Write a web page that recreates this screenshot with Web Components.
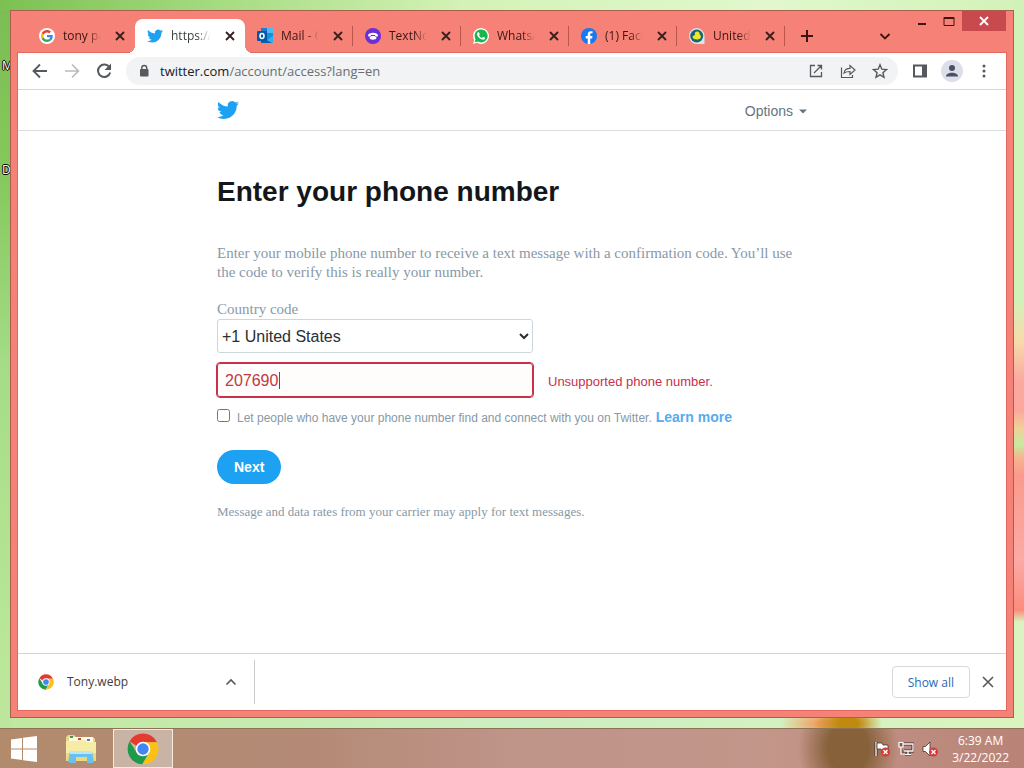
<!DOCTYPE html>
<html lang="en">
<head>
<meta charset="utf-8">
<title>Enter your phone number</title>
<style>
  html, body { margin: 0; height: 100%; }
  body { font-family: "Open Sans", "Noto Sans", sans-serif; font-size: 12px; color: #3c4043; }
</style>
</head>
<body>
<desk-top>
  <browser-window>
    <tab-strip slot="tabs">
      <browser-tab icon="google">tony paj</browser-tab>
      <browser-tab icon="bird" active>https://tw</browser-tab>
      <browser-tab icon="outlook">Mail - O</browser-tab>
      <browser-tab icon="textnow">TextNow</browser-tab>
      <browser-tab icon="whatsapp">WhatsAp</browser-tab>
      <browser-tab icon="facebook">(1) Faceb</browser-tab>
      <browser-tab icon="duck">United S</browser-tab>
    </tab-strip>
    <nav-bar slot="nav"></nav-bar>
    <site-page slot="page">
      <site-header></site-header>
      <phone-form></phone-form>
    </site-page>
    <download-bar slot="downloads"></download-bar>
  </browser-window>
  <task-bar slot="taskbar"></task-bar>
</desk-top>

<script>
const chromeLogo = `
  <path d="M4 12.500A23 23 0 0 1 44 12.500L45 14L24 14A10 10 0 0 0 15 20Z" fill="#e33b2e"/>
  <path d="M4 12.500A23 23 0 0 0 23 47L33 29.500L24 24L14.500 29.500Z" fill="#1f9a4a"/>
  <path d="M33.500 29.500L23 47A23 23 0 0 0 45 14L25 14Z" fill="#fbc116"/>
  <circle cx="24" cy="24" r="11" fill="#fff"/>
  <circle cx="24" cy="24" r="8.500" fill="#4385f5"/>`;
const birdPath = `<path fill="#1da1f2" d="M23.953 4.57a10 10 0 01-2.825.775 4.958 4.958 0 002.163-2.723c-.951.555-2.005.959-3.127 1.184a4.92 4.92 0 00-8.384 4.482C7.69 8.095 4.067 6.13 1.64 3.162a4.822 4.822 0 00-.666 2.475c0 1.71.87 3.213 2.188 4.096a4.904 4.904 0 01-2.228-.616v.06a4.923 4.923 0 003.946 4.827 4.996 4.996 0 01-2.212.085 4.936 4.936 0 004.604 3.417 9.867 9.867 0 01-6.102 2.105c-.39 0-.779-.023-1.17-.067a13.995 13.995 0 007.557 2.209c9.053 0 13.998-7.496 13.998-13.985 0-.21 0-.42-.015-.63A9.935 9.935 0 0024 4.59z"/>`;
const stroke = 'fill="none" stroke="currentColor"';

/* name: [viewBox, markup] */
const ICONS = {
  chrome: ['0 0 48 48', chromeLogo],
  bird: ['0 0 24 24', birdPath],
  google: ['0 0 16 16', `<circle cx="8" cy="8" r="8" fill="#fff"/>
    <g transform="translate(2 2) scale(.25)">
    <path fill="#EA4335" d="M24 9.500c3.540 0 6.710 1.220 9.210 3.600l6.850-6.850C35.900 2.380 30.470 0 24 0 14.620 0 6.510 5.380 2.560 13.220l7.980 6.190C12.430 13.720 17.740 9.500 24 9.500z"/>
    <path fill="#4285F4" d="M46.980 24.550c0-1.570-.15-3.090-.38-4.550H24v9.020h12.940c-.58 2.960-2.260 5.480-4.780 7.180l7.730 6c4.510-4.180 7.090-10.360 7.090-17.650z"/>
    <path fill="#FBBC05" d="M10.530 28.590c-.48-1.450-.76-2.990-.76-4.590s.27-3.140.76-4.590l-7.980-6.190C.92 16.460 0 20.120 0 24c0 3.880.92 7.540 2.560 10.780l7.970-6.190z"/>
    <path fill="#34A853" d="M24 48c6.480 0 11.930-2.130 15.890-5.810l-7.730-6c-2.150 1.450-4.920 2.300-8.160 2.300-6.260 0-11.570-4.220-13.470-9.910l-7.980 6.190C6.510 42.620 14.620 48 24 48z"/></g>`],
  outlook: ['0 0 16 16', `<rect x="4" y="0" width="12" height="15" rx="1" fill="#1490df"/>
    <rect x="10" y="0" width="6" height="5" fill="#50b9ef"/><rect x="4" y="0" width="6" height="5" fill="#1a7fd0"/>
    <path d="M10 12L16 8V15H8Z" fill="#35aeee"/><path d="M4 9L15 15H4Z" fill="#0c5fa8"/>
    <rect x="0" y="3" width="10" height="10" rx="1" fill="#0358a7"/>
    <ellipse cx="5" cy="8" rx="2" ry="2.400" fill="none" stroke="#fff" stroke-width="1.500"/>`],
  textnow: ['0 0 16 16', `<circle cx="8" cy="8" r="8" fill="#6b2fd6"/>
    <path d="M3 7.500C3 3.800 13 3.800 13 7.500L12.500 8.500H10.500L10 7H6L5.500 8.500H3.500Z" fill="#fff"/>
    <path d="M4.500 9.500L6.500 8H9.500L11.500 9.500C11.500 12.500 4.500 12.500 4.500 9.500Z" fill="#fff"/>`],
  whatsapp: ['0 0 24 24', `<path d="M0 24L1.700 17.900A11.900 11.900 0 1 1 6.100 22.300Z" fill="#fff"/>
    <path d="M2.500 21.500L3.800 17A9.800 9.800 0 1 1 7.300 20.400Z" fill="#16b84e"/>
    <path fill="#fff" d="M17.472 14.382c-.297-.149-1.758-.867-2.030-.967-.273-.099-.471-.148-.670.150-.197.297-.767.966-.940 1.164-.173.199-.347.223-.644.075-.297-.150-1.255-.463-2.390-1.475-.883-.788-1.480-1.761-1.653-2.059-.173-.297-.018-.458.130-.606.134-.133.298-.347.446-.520.149-.174.198-.298.298-.497.099-.198.050-.371-.025-.520-.075-.149-.669-1.612-.916-2.207-.242-.579-.487-.500-.669-.510-.173-.008-.371-.010-.570-.010-.198 0-.520.074-.792.372-.272.297-1.040 1.016-1.040 2.479 0 1.462 1.065 2.875 1.213 3.074.149.198 2.096 3.200 5.077 4.487.709.306 1.262.489 1.694.625.712.227 1.360.195 1.871.118.571-.085 1.758-.719 2.006-1.413.248-.694.248-1.289.173-1.413-.074-.124-.272-.198-.570-.347"/>`],
  facebook: ['0 0 24 24', `<circle cx="12" cy="12" r="12" fill="#1778f2"/>
    <path fill="#fff" d="M10.125 24v-8.437H7.078V12.090h3.047V9.410c0-3.007 1.792-4.669 4.533-4.669 1.312 0 2.686.235 2.686.235v2.953H15.830c-1.491 0-1.956.925-1.956 1.874v2.287h3.328l-.532 3.473h-2.796V24Z"/>`],
  duck: ['0 0 16 16', `<path d="M8 0A8 8 0 0 1 15.500 8V16H8A8 8 0 0 1 8 0Z" fill="#d6e6ec"/><circle cx="7.700" cy="8" r="6.500" fill="#196571"/>
    <path d="M3.500 8.500C4.500 7.800 5.500 7.500 6 6.500C5.500 4 7 3.300 8.500 3.500C10 3.700 10.800 5 10.500 6.200C12.500 7.500 12.500 10.500 9.500 11.300C6.500 12 3.500 11 3.500 8.500Z" fill="#f2e62c"/>`],
  close: ['0 0 14 14', `<path d="M3 3L11 11M11 3L3 11" ${stroke} stroke-width="1.800"/>`],
  thinclose: ['0 0 14 14', `<path d="M2 2L12 12M12 2L2 12" ${stroke} stroke-width="1.600"/>`],
  plus: ['0 0 14 14', `<path d="M7 1V13M1 7H13" ${stroke} stroke-width="2"/>`],
  down: ['0 0 14 14', `<path d="M2.500 5L7 9.500L11.500 5" ${stroke} stroke-width="1.800"/>`],
  up: ['0 0 14 14', `<path d="M2.500 9.500L7 5L11.500 9.500" ${stroke} stroke-width="1.600"/>`],
  caret: ['0 0 8 8', `<path d="M0 2.500H8L4 6.500Z" fill="currentColor"/>`],
  minimize: ['0 0 14 14', `<path d="M3 10H11" ${stroke} stroke-width="2"/>`],
  maximize: ['0 0 14 14', `<path d="M2 3.500H12V11.500H2Z" ${stroke} stroke-width="1"/><path d="M2 4H12" ${stroke} stroke-width="2"/>`],
  back: ['0 0 16 16', `<path d="M15 8H2M8 1.500L1.500 8L8 14.500" ${stroke} stroke-width="1.800"/>`],
  forward: ['0 0 16 16', `<path d="M1 8H14M8 1.500L14.500 8L8 14.500" ${stroke} stroke-width="1.600"/>`],
  reload: ['0 0 16 16', `<path d="M13.500 4.500A6.200 6.200 0 1 0 14.200 9.500" ${stroke} stroke-width="2"/><path d="M15 .5V7H8.500Z" fill="currentColor"/>`],
  lock: ['0 0 16 16', `<rect x="4" y="6" width="8.500" height="7.500" rx="1" fill="currentColor"/><path d="M5.800 7V5A2.400 2.400 0 0 1 10.700 5V7" ${stroke} stroke-width="1.400"/>`],
  open: ['0 0 16 16', `<path d="M7 2.500H2.500V13.500H13.500V9M9.500 2.500H13.500V6.500M13.500 2.500L6 10" ${stroke} stroke-width="1.300"/>`],
  share: ['0 0 16 16', `<path d="M1.500 4.500V14.500H12.500V12M4 10C4.500 7 6.500 5.300 10 5.300V2.500L15 7L10 11.500V8.500C7.500 8.500 5.500 9 4 10Z" ${stroke} stroke-width="1.200"/>`],
  star: ['0 0 16 16', `<path d="M8 1.800L9.800 6.200L14.500 6.600L10.900 9.700L12 14.300L8 11.800L4 14.300L5.100 9.700L1.500 6.600L6.200 6.200Z" ${stroke} stroke-width="1.400"/>`],
  panel: ['0 0 16 16', `<path d="M2 2.500H14V13.500H2Z" ${stroke} stroke-width="2"/><path d="M10 2H15V14H10Z" fill="currentColor"/>`],
  avatar: ['0 0 22 22', `<circle cx="11" cy="11" r="11" fill="#dcdfe8"/><circle cx="11" cy="8" r="3" fill="#4a5068"/><path d="M5 16.500C5 11.500 17 11.500 17 16.500Z" fill="#4a5068"/>`],
  dots: ['0 0 16 16', `<g fill="currentColor"><circle cx="8" cy="3" r="1.500"/><circle cx="8" cy="8" r="1.500"/><circle cx="8" cy="13" r="1.500"/></g>`],
  windows: ['0 0 26 26', `<path fill="#fff" d="M0 3.500L11 2V12.500H0ZM12 1.800L26 0V12.500H12ZM0 13.500H11V24L0 22.500ZM12 13.500H26V26L12 24.200Z"/>`],
  folder: ['0 0 32 32', `<path d="M1 4L3 2H9L11 4H28L30 6V28H1Z" fill="#e9d684"/><path d="M4 4H28V9H4Z" fill="#fffbe8"/>
    <path d="M5 3H8V5H5Z" fill="#3a9b4b"/><path d="M13 5H16V7H13Z" fill="#d24b35"/><path d="M22 6H25V8H22Z" fill="#3f86d0"/>
    <path d="M1 8H13L15 7H20L22 9H31V28H1Z" fill="#f6eca6"/><path d="M1 20H31V28H1Z" fill="#ead982"/>
    <path d="M3 29L5 18H27L29 29L27 30H22V24H11V30H6Z" fill="#6cc0ec"/><path d="M5 18H27V21H5Z" fill="#b9e6fb"/>`],
  flag: ['0 0 16 16', `<path d="M2 1V15" stroke="#4a3030" stroke-width="3"/><path d="M2 1V15" stroke="#fff" stroke-width="1.300"/><path d="M3 2H8L9 4H14V10H8L7 8H3Z" fill="#fff" stroke="#4a3030" stroke-width=".8"/>
    <circle cx="11.500" cy="11" r="4.500" fill="#d53b3b"/><path d="M9.500 9L13.500 13M13.500 9L9.500 13" stroke="#fff" stroke-width="1.400"/>`],
  network: ['0 0 16 16', `<path d="M5 3H15V10H6M10 10V13M7 13.500H13" fill="none" stroke="#432c28" stroke-width="3"/><path d="M5 3H15V10H6M10 10V13M7 13.500H13" fill="none" stroke="#fff" stroke-width="1.300"/>
    <path d="M1 1.500H5V6H1ZM3 6V13H7" fill="#7b5c50" stroke="#fff" stroke-width="1.200"/>`],
  sound: ['0 0 16 16', `<path d="M1 5.500H3.500L8 1V15L3.500 10.500H1Z" fill="#fff" stroke="#4a3030" stroke-width=".8"/>
    <circle cx="11.500" cy="11" r="4.500" fill="#d53b3b"/><path d="M9.500 9L13.500 13M13.500 9L9.500 13" stroke="#fff" stroke-width="1.400"/>`]
};

function define(name, html, setup) {
  const template = document.createElement('template');
  template.innerHTML = html;
  customElements.define(name, class extends HTMLElement {
    constructor() {
      super();
      this.attachShadow({ mode: 'open' }).append(template.content.cloneNode(true));
    }
    connectedCallback() { if (setup) setup(this, this.shadowRoot); }
  });
}

function makeIcon(name) {
  const icon = document.createElement('app-icon');
  icon.setAttribute('name', name);
  return icon;
}

define('app-icon', `<style>
  :host { display: block; flex: none; width: 16px; height: 16px; }
  svg { display: block; width: 100%; height: 100%; }
</style><svg aria-hidden="true"></svg>`, (el, root) => {
  const [box, markup] = ICONS[el.getAttribute('name')];
  const svg = root.querySelector('svg');
  svg.setAttribute('viewBox', box);
  svg.innerHTML = markup;
});

define('icon-button', `<style>
  :host { display: block; flex: none; width: 32px; height: 32px; color: #55585d; }
  button { all: unset; display: grid; place-items: center; width: 100%; height: 100%; }
  app-icon { width: var(--glyph, 16px); height: var(--glyph, 16px); }
</style><button type="button"></button>`, (el, root) => {
  const button = root.querySelector('button');
  button.setAttribute('aria-label', el.getAttribute('label'));
  button.replaceChildren(makeIcon(el.getAttribute('name')));
});

define('desk-top', `<style>
  :host { display: grid; grid-template-rows: 1fr 40px; min-height: 100vh; position: relative; isolation: isolate; overflow: hidden;
    background:
      radial-gradient(ellipse 34px 20px at 848px calc(100% - 44px), #c08a10 30%, transparent),
      radial-gradient(ellipse 46px 16px at 826px calc(100% - 44px), #f0a060 20%, transparent),
      linear-gradient(#d0f2b8 0 300px, #f6dcaa 340px, #fbaaa0 380px, #fba79c 410px, #f0d098 428px, #c6eaa0 445px, #f7b48e 458px, #fa9a8c 475px, #fcaaa6 560px, #fb8c7c 610px, #d9f4c0 622px) right / 12px 100% no-repeat,
      linear-gradient(90deg, #7cc052, #a7dc83 22%, #d3f2b6 45%, #e0f8cc 75%, #d2f2b8) top / 100% 10px no-repeat,
      linear-gradient(#7cbd53, #84c85c 170px, #a6dc88 370px, #b9e797 650px, #bfe6a2) left / 12px 100% no-repeat,
      linear-gradient(90deg, #bfe8a0, #cdeec2 50%, #d9f4c0); }
  .shortcut { position: absolute; z-index: -1; left: 2px; font-size: 12px; line-height: 16px; color: #fff; text-shadow: 1px 0 #000, -1px 0 #000, 0 1px #000, 0 -1px #000; }
  .first { top: 58px; } .second { top: 162px; }
</style>
<span class="shortcut first">M</span><span class="shortcut second">D</span>
<slot></slot><slot name="taskbar"></slot>`);

define('browser-window', `<style>
  :host { display: flex; flex-direction: column; margin: 10px; padding: 0 7px 7px; background: #f68176; border: 1px solid #a95f4c; }
  .client { flex: 1; display: flex; flex-direction: column; background: #fff; outline: 1px solid #e2695f; }
  ::slotted([slot=page]) { flex: 1; }
</style><slot name="tabs"></slot><div class="client"><slot name="nav"></slot><slot name="page"></slot><slot name="downloads"></slot></div>`);

define('tab-strip', `<style>
  :host { display: flex; align-items: flex-end; height: 42px; padding-left: 9px; color: #3c1512; }
  .tabs { display: flex; min-width: 0; }
  icon-button { color: #3c1512; --glyph: 14px; height: 34px; }
  .new { margin-left: 8px; width: 28px; }
  .spacer { flex: 1; }
  .search { width: 28px; margin-right: 9px; }
  .controls { display: flex; align-self: flex-start; }
  .controls icon-button { width: 27px; height: 20px; }
  .controls .close { width: 44px; background: #c84a4e; color: #fff; }
</style>
<div class="tabs" role="tablist"><slot></slot></div>
<icon-button class="new" name="plus" label="New tab"></icon-button>
<span class="spacer"></span>
<icon-button class="search" name="down" label="Search tabs"></icon-button>
<div class="controls">
  <icon-button name="minimize" label="Minimize"></icon-button>
  <icon-button name="maximize" label="Maximize"></icon-button>
  <icon-button class="close" name="close" label="Close window"></icon-button>
</div>`);

define('browser-tab', `<style>
  :host { display: flex; align-items: center; gap: 8px; box-sizing: border-box; flex: 0 1 auto; width: 108px; min-width: 0; height: 34px; padding: 0 8px 0 12px; position: relative;
    background: linear-gradient(#b8564c, #b8564c) right / 1px 20px no-repeat; }
  :host([active]) { width: 110px; background: #fff; border-radius: 8px 8px 0 0; color: #3c4043; }
  :host([icon=google]) { background: none; }
  :host([active])::before, :host([active])::after { content: ""; position: absolute; bottom: 0; width: 8px; height: 8px; }
  :host([active])::before { right: 100%; background: radial-gradient(circle at 0 0, transparent 8px, #fff 8px); }
  :host([active])::after { left: 100%; background: radial-gradient(circle at 100% 0, transparent 8px, #fff 8px); }
  .title { flex: 1; min-width: 0; overflow: hidden; white-space: nowrap; line-height: 16px; mask-image: linear-gradient(90deg, #000 60%, transparent 90%); }
  icon-button { width: 14px; height: 14px; --glyph: 14px; color: #33201f; }
</style><span class="title"><slot></slot></span><icon-button name="close" label="Close tab"></icon-button>`, (el, root) => {
  el.setAttribute('role', 'tab');
  root.querySelector('.title').before(makeIcon(el.getAttribute('icon')));
});

define('nav-bar', `<style>
  :host { display: flex; align-items: center; height: 36px; padding: 0 6px; border-bottom: 1px solid #d5d7da; }
  .address { flex: 1; min-width: 0; display: flex; align-items: center; height: 28px; margin: 0 6px; padding: 0 2px 0 10px; border-radius: 14px; background: #f1f3f4; color: #55585d; }
  .url { flex: 1; margin-left: 8px; font-size: 13px; line-height: 20px; color: #6a6d72; white-space: nowrap; }
  b { font-weight: 400; color: #202124; }
  .off { color: #b8babd; }
  .me { --glyph: 22px; }
</style>
<icon-button name="back" label="Back"></icon-button>
<icon-button class="off" name="forward" label="Forward"></icon-button>
<icon-button name="reload" label="Reload"></icon-button>
<div class="address"><app-icon name="lock"></app-icon><span class="url"><b>twitter.com</b>/account/access?lang=en</span>
  <icon-button name="open" label="Open"></icon-button>
  <icon-button name="share" label="Share"></icon-button>
  <icon-button name="star" label="Bookmark"></icon-button></div>
<icon-button name="panel" label="Side panel"></icon-button>
<icon-button class="me" name="avatar" label="Profile"></icon-button>
<icon-button name="dots" label="Menu"></icon-button>`);

define('site-page', `<style>
  :host { display: block; font-family: "Liberation Sans", Arial, sans-serif; }
</style><slot></slot>`);

define('site-header', `<style>
  :host { display: block; border-bottom: 1px solid #d9dde0; }
  .inner { display: flex; justify-content: space-between; align-items: center; max-width: 590px; height: 40px; margin: 0 auto; }
  a app-icon { width: 22px; height: 22px; }
  button { all: unset; display: flex; align-items: center; gap: 6px; padding-top: 2px; font-size: 14px; line-height: 20px; color: #66757f; }
  button app-icon { width: 8px; height: 8px; }
</style><div class="inner"><a href="#" aria-label="Twitter"><app-icon name="bird"></app-icon></a>
<button type="button">Options<app-icon name="caret"></app-icon></button></div>`);

define('phone-form', `<style>
  :host { display: block; max-width: 590px; margin: 0 auto; padding-top: 45px; color: #8899a6; }
  h1 { margin: 0 0 36px; font-size: 28px; line-height: 32px; color: #14171a; }
  p, .country { font-family: "Liberation Serif", "Times New Roman", serif; font-size: 15px; line-height: 19px; }
  p { margin: 0 0 18px; }
  .country { display: block; }
  select, .phone { box-sizing: border-box; width: 316px; height: 34px; font: 16px "Liberation Sans", Arial, sans-serif; border: 1px solid #ccd6dd; border-radius: 3px; }
  select { display: block; padding: 0; background: #fff; color: #292f33; }
  .row { display: flex; align-items: center; gap: 15px; margin-top: 10px; font-size: 13px; line-height: 18px; color: #c9304a; }
  .row span { padding-top: 4px; }
  .phone { padding: 2px 7px 0; color: #c03a3e; border-color: #c9304a; outline: 1px solid #c9304a;
    background: linear-gradient(#a03040, #a03040) 61px 50% / 1px 17px no-repeat #fffdfc; }
  .discover { display: flex; align-items: center; margin-top: 9px; font-size: 12px; line-height: 20px; }
  .discover input { width: 13px; height: 13px; margin: 0 7px 4px 0; }
  .discover label { padding-top: 2px; }
  a { margin-left: 4px; font-size: 14px; font-weight: 700; color: #55acee; text-decoration: none; }
  .next { display: block; margin: 22px 0 18px; padding: 0 17px; height: 34px; border: 0; border-radius: 17px; background: #1da1f2; color: #fff; font: 700 14px "Liberation Sans", Arial, sans-serif; }
  .rates { font-size: 13px; }
</style>
<form onsubmit="return false">
<h1>Enter your phone number</h1>
<p>Enter your mobile phone number to receive a text message with a confirmation code. You’ll use the code to verify this is really your number.</p>
<label class="country" for="country">Country code</label>
<select id="country"><option>+1 United States</option></select>
<div class="row"><input class="phone" type="text" value="207690" aria-label="Phone number" aria-describedby="error"><span id="error">Unsupported phone number.</span></div>
<div class="discover"><input type="checkbox" id="discover"><label for="discover">Let people who have your phone number find and connect with you on Twitter.</label><a href="#">Learn more</a></div>
<button class="next" type="submit">Next</button>
<p class="rates">Message and data rates from your carrier may apply for text messages.</p>
</form>`);

define('download-bar', `<style>
  :host { display: flex; align-items: center; height: 56px; border-top: 1px solid #d2d4d7; }
  .item { display: flex; align-items: center; box-sizing: border-box; width: 237px; height: 44px; padding: 0 7px 0 20px; border-right: 1px solid #c8cacd; }
  .name { flex: 1; margin-left: 13px; font-size: 12px; line-height: 18px; }
  .item icon-button { --glyph: 14px; }
  .all { margin-left: auto; height: 32px; padding: 0 15px; background: #fff; border: 1px solid #d5d8dd; border-radius: 4px; font: 12px "Open Sans", "Noto Sans", sans-serif; color: #2a69b5; }
  .hide { width: 36px; --glyph: 14px; }
</style>
<div class="item"><app-icon name="chrome"></app-icon><span class="name">Tony.webp</span><icon-button name="up" label="Download options"></icon-button></div>
<button class="all" type="button">Show all</button>
<icon-button class="hide" name="thinclose" label="Hide downloads"></icon-button>`);

define('task-bar', `<style>
  :host { display: flex; align-items: center; box-sizing: border-box; height: 40px; padding: 0 15px 0 8px; border-top: 1px solid #8d7258; color: #fff;
    background: radial-gradient(ellipse 50px 60px at 848px 50%, #86613a 40%, transparent), linear-gradient(90deg, #b28b6d, #b48a76 30%, #bf9489 50%, #c3968a 75%, #b98377); }
  icon-button { height: 39px; }
  .start { --glyph: 26px; }
  .files { --glyph: 32px; margin-left: 25px; }
  .running { box-sizing: border-box; width: 60px; margin-left: 16px; --glyph: 32px; border: 1px solid #f2ebe0; background: #c9b3a5; }
  .tray { display: flex; gap: 8px; margin-left: auto; }
  time { margin-left: 14px; text-align: center; font-size: 12px; line-height: 17px; }
</style>
<icon-button class="start" name="windows" label="Start"></icon-button>
<icon-button class="files" name="folder" label="File Explorer"></icon-button>
<icon-button class="running" name="chrome" label="Chrome"></icon-button>
<div class="tray"><app-icon name="flag"></app-icon><app-icon name="network"></app-icon><app-icon name="sound"></app-icon></div>
<time>6:39 AM<br>3/22/2022</time>`);
</script>
</body>
</html>
